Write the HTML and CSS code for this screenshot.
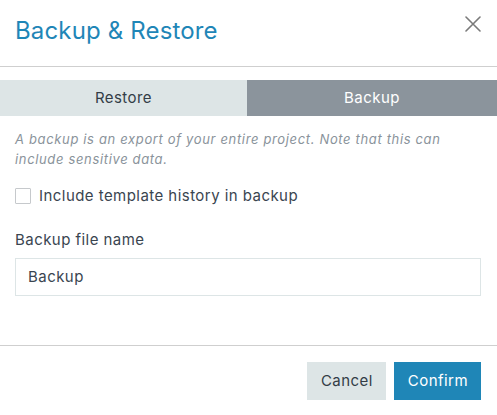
FILE: index.html
```html
<!DOCTYPE html>
<html lang="en">
<head>
<meta charset="utf-8">
<title>Backup &amp; Restore</title>
<link rel="stylesheet" href="styles.css">
</head>
<body>
<div class="dialog">
  <header class="dialog-header">
    <h1 class="dialog-title">Backup &amp; Restore</h1>
    <button class="close-btn" aria-label="Close">
      <svg viewBox="0 0 16 16" width="16" height="16"><path d="M1 1 L15 15 M15 1 L1 15" stroke="#7a7a7a" stroke-width="1.6" fill="none" stroke-linecap="round"/></svg>
    </button>
  </header>
  <div class="tabs">
    <div class="tab">Restore</div>
    <div class="tab tab-active">Backup</div>
  </div>
  <div class="dialog-body">
    <p class="description">A backup is an export of your entire project. Note that this can include sensitive data.</p>
    <label class="check-row">
      <span class="checkbox"></span>
      <span class="check-label">Include template history in backup</span>
    </label>
    <div class="field-label">Backup file name</div>
    <div class="text-input">Backup</div>
  </div>
  <footer class="dialog-footer">
    <button class="btn btn-cancel">Cancel</button>
    <button class="btn btn-confirm">Confirm</button>
  </footer>
</div>
</body>
</html>
```
FILE: styles.css
```css
* { box-sizing: border-box; }
html, body {
  margin: 0;
  padding: 0;
  background: #ffffff;
}
body {
  font-family: Inter, "Noto Sans", "Liberation Sans", sans-serif;
  color: #3a4550;
  letter-spacing: 0.45px;
}
.dialog {
  width: 497px;
  height: 415px;
  display: flex;
  flex-direction: column;
}
.dialog-header {
  height: 67px;
  padding: 16px 16px 0 15px;
  display: flex;
  justify-content: space-between;
  align-items: flex-start;
  border-bottom: 1px solid #cfcfcf;
}
.dialog-title {
  margin: 0;
  font-size: 24px;
  line-height: 30px;
  font-weight: 400;
  color: #1f86b7;
  letter-spacing: 0.15px;
}
.close-btn {
  border: 0;
  background: none;
  padding: 0;
  width: 16px;
  height: 16px;
  display: block;
}
.close-btn svg { display: block; }
.tabs {
  margin-top: 13px;
  display: grid;
  grid-template-columns: 247px 1fr;
  height: 36px;
}
.tab {
  background: #dde5e6;
  color: #333d47;
  font-size: 15px;
  line-height: 36px;
  text-align: center;
}
.tab-active {
  background: #8b949c;
  color: #ffffff;
}
.dialog-body {
  padding: 0 16px 0 15px;
  flex: 1;
}
.description {
  margin: 13px 0 0 0;
  font-size: 13px;
  line-height: 20px;
  font-style: italic;
  color: #8a939b;
  letter-spacing: 0.65px;
}
.check-row {
  margin-top: 19px;
  display: flex;
  align-items: center;
  gap: 8px;
  height: 16px;
}
.checkbox {
  width: 16px;
  height: 16px;
  border: 1px solid #c6c9cc;
  border-radius: 1px;
  background: #fff;
  flex: none;
}
.check-label {
  font-size: 15px;
  line-height: 18px;
  color: #3a4550;
}
.field-label {
  margin-top: 27px;
  font-size: 15px;
  line-height: 18px;
  color: #3a4550;
}
.text-input {
  margin-top: 9px;
  height: 38px;
  border: 1px solid #dde5e6;
  padding: 0 12px;
  font-size: 15px;
  line-height: 36px;
  color: #3a4550;
}
.dialog-footer {
  border-top: 1px solid #cfcfcf;
  padding: 16px 16px 15px;
  display: flex;
  justify-content: flex-end;
  gap: 8px;
}
.btn {
  height: 38px;
  border: 0;
  padding: 0 13px 0 14px;
  font-family: inherit;
  font-size: 15px;
  line-height: 38px;
  letter-spacing: 0.45px;
  border-radius: 0;
}
.btn-cancel {
  background: #dde5e6;
  color: #333d47;
}
.btn-confirm {
  background: #1f86b7;
  color: #ffffff;
}
```
